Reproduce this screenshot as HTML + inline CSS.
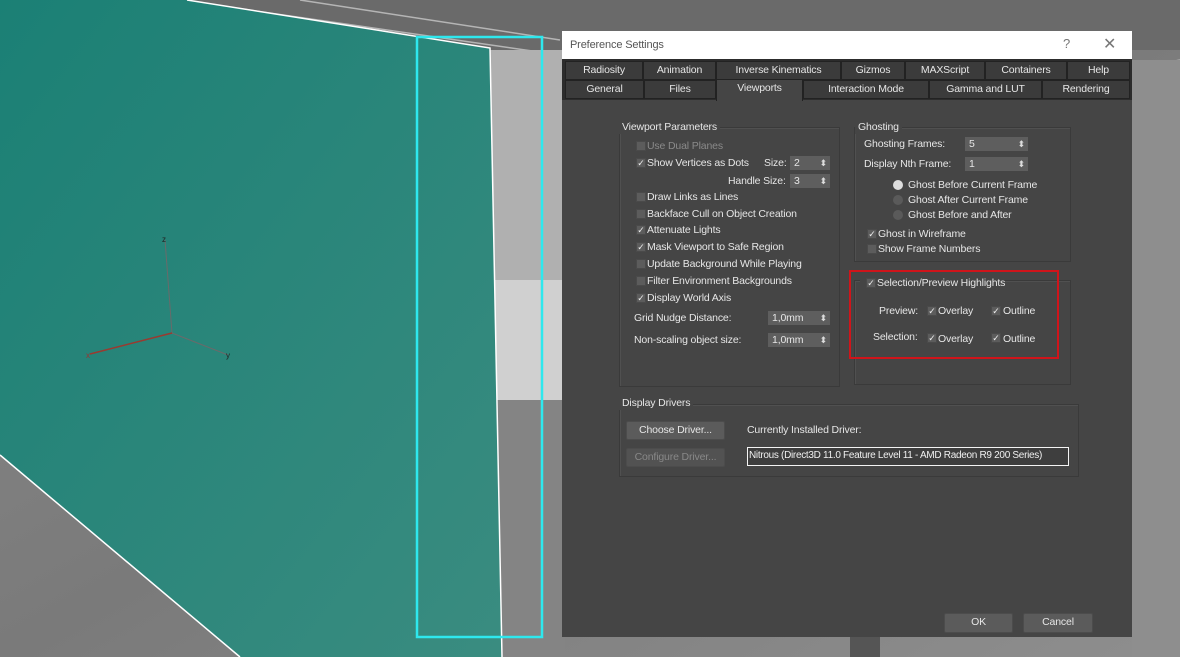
<!DOCTYPE html>
<html><head><meta charset="utf-8"><style>
*{margin:0;padding:0;box-sizing:border-box}
body{width:1180px;height:657px;overflow:hidden;position:relative;font-family:"Liberation Sans",sans-serif;font-size:10.5px;letter-spacing:-0.15px;background:#8c8c8c}
.a{position:absolute;white-space:nowrap}
.t{position:absolute;white-space:nowrap;color:#e6e6e6;line-height:14px;height:14px}
.dis{color:#8a8a8a}
.cb{position:absolute;width:10px;height:10px;background:#5c5c5c;border:1px solid #4a4a4a;color:#eee;font-size:9px;line-height:9px;text-align:center}
.rb{position:absolute;width:10px;height:10px;border-radius:50%;background:#5a5a5a}
.sp{position:absolute;height:14px;background:#5e5e5e;color:#e6e6e6;line-height:14px;padding-left:4px}
.sp:after{content:"⬍";position:absolute;right:3px;top:0;font-size:9px;color:#ddd}
.grp{position:absolute;border:1px solid #3a3a3a;box-shadow:1px 1px 0 #505050 inset}
.lbl{position:absolute;background:#454545;padding:0 3px;color:#e6e6e6;line-height:14px}
.tab{position:absolute;height:19px;background:#3b3b3b;border:1px solid #222;color:#e6e6e6;text-align:center;line-height:17px}
.btn{position:absolute;background:#5b5b5b;border:1px solid #4c4c4c;color:#e6e6e6;text-align:center;line-height:17px;border-radius:2px}
</style></head><body>
<svg class="a" style="left:0;top:0" width="1180" height="657">
<defs><linearGradient id="g" x1="0" y1="0" x2="1" y2="1"><stop offset="0" stop-color="#1b8075"/><stop offset="1" stop-color="#3a8c80"/></linearGradient>
<linearGradient id="bg" x1="0" y1="0" x2="1" y2="1"><stop offset="0" stop-color="#8a8a8a"/><stop offset=".5" stop-color="#7a7a7a"/><stop offset="1" stop-color="#8e8e8e"/></linearGradient></defs>
<rect width="1180" height="657" fill="url(#bg)"/>
<rect x="0" y="0" width="1180" height="50" fill="#6a6a6a"/>
<g stroke="#b5b5b5" stroke-width="1.5" fill="none"><line x1="180" y1="0" x2="560" y2="55"/><line x1="300" y1="0" x2="560" y2="40"/><line x1="1130" y1="70" x2="1180" y2="60"/></g>
<rect x="1132" y="60" width="48" height="597" fill="#8e8e8e"/>
<rect x="490" y="50" width="75" height="230" fill="#b0b0b0"/>
<rect x="495" y="280" width="70" height="120" fill="#d0d0d0"/>
<rect x="495" y="400" width="70" height="257" fill="#848484"/>
<polygon points="187,0 490,48 502,657 240,657 0,455 0,0" fill="url(#g)"/>
<polyline points="187,0 490,48 502,657" stroke="#fff" stroke-width="1.5" fill="none"/>
<line x1="0" y1="455" x2="240" y2="657" stroke="#fff" stroke-width="1.5"/>
<g stroke="#6a6a6a" stroke-width="1"><line x1="165" y1="240" x2="172" y2="333"/><line x1="172" y1="333" x2="228" y2="355"/></g>
<line x1="172" y1="333" x2="90" y2="354" stroke="#9a3a30" stroke-width="1.5"/>
<text x="162" y="242" font-size="8" fill="#222" font-family="Liberation Sans">z</text>
<text x="226" y="358" font-size="8" fill="#222" font-family="Liberation Sans">y</text>
<text x="86" y="358" font-size="8" fill="#933" font-family="Liberation Sans">x</text>
<rect x="417" y="37" width="125" height="600" fill="none" stroke="#2ee8ee" stroke-width="2.5"/>
</svg>
<div class="a" style="left:562px;top:31px;width:570px;height:606px;background:#454545"></div>
<div class="a" style="left:562px;top:31px;width:570px;height:28px;background:#fff"></div>
<div class="a" style="left:570px;top:37px;color:#555;font-size:11px;line-height:16px">Preference Settings</div>
<div class="a" style="left:1063px;top:36px;color:#777;font-size:13px">?</div>
<div class="a" style="left:1103px;top:34px;color:#777;font-size:16px">✕</div>
<div class="a" style="left:562px;top:59px;width:570px;height:41px;background:#2c2c2c"></div>
<div class="tab" style="left:565px;top:61px;width:78px">Radiosity</div>
<div class="tab" style="left:643px;top:61px;width:73px">Animation</div>
<div class="tab" style="left:716px;top:61px;width:125px">Inverse Kinematics</div>
<div class="tab" style="left:841px;top:61px;width:64px">Gizmos</div>
<div class="tab" style="left:905px;top:61px;width:80px">MAXScript</div>
<div class="tab" style="left:985px;top:61px;width:82px">Containers</div>
<div class="tab" style="left:1067px;top:61px;width:63px">Help</div>
<div class="tab" style="left:565px;top:80px;width:79px">General</div>
<div class="tab" style="left:644px;top:80px;width:72px">Files</div>
<div class="tab" style="left:716px;top:79px;width:87px;height:22px;background:#454545;border-bottom:none">Viewports</div>
<div class="tab" style="left:803px;top:80px;width:126px">Interaction Mode</div>
<div class="tab" style="left:929px;top:80px;width:113px">Gamma and LUT</div>
<div class="tab" style="left:1042px;top:80px;width:88px">Rendering</div>

<div class="grp" style="left:619px;top:127px;width:221px;height:260px"></div>
<div class="lbl" style="left:619px;top:120px">Viewport Parameters</div>
<div class="grp" style="left:854px;top:127px;width:217px;height:135px"></div>
<div class="lbl" style="left:855px;top:120px">Ghosting</div>
<div class="grp" style="left:854px;top:280px;width:217px;height:105px"></div>
<div class="grp" style="left:619px;top:404px;width:460px;height:73px"></div>
<div class="lbl" style="left:619px;top:396px">Display Drivers</div>

<div class="cb" style="left:636px;top:141px;color:transparent"></div><div class="t dis" style="left:647px;top:139px">Use Dual Planes</div>
<div class="cb" style="left:636px;top:158px">✓</div><div class="t" style="left:647px;top:156px">Show Vertices as Dots</div>
<div class="t" style="left:764px;top:156px">Size:</div><div class="sp" style="left:790px;top:156px;width:40px">2</div>
<div class="t" style="left:728px;top:174px">Handle Size:</div><div class="sp" style="left:790px;top:174px;width:40px">3</div>
<div class="cb" style="left:636px;top:192px"></div><div class="t" style="left:647px;top:190px">Draw Links as Lines</div>
<div class="cb" style="left:636px;top:209px"></div><div class="t" style="left:647px;top:207px">Backface Cull on Object Creation</div>
<div class="cb" style="left:636px;top:225px">✓</div><div class="t" style="left:647px;top:223px">Attenuate Lights</div>
<div class="cb" style="left:636px;top:242px">✓</div><div class="t" style="left:647px;top:240px">Mask Viewport to Safe Region</div>
<div class="cb" style="left:636px;top:259px"></div><div class="t" style="left:647px;top:257px">Update Background While Playing</div>
<div class="cb" style="left:636px;top:276px"></div><div class="t" style="left:647px;top:274px">Filter Environment Backgrounds</div>
<div class="cb" style="left:636px;top:293px">✓</div><div class="t" style="left:647px;top:291px">Display World Axis</div>
<div class="t" style="left:634px;top:311px">Grid Nudge Distance:</div><div class="sp" style="left:768px;top:311px;width:62px">1,0mm</div>
<div class="t" style="left:634px;top:333px">Non-scaling object size:</div><div class="sp" style="left:768px;top:333px;width:62px">1,0mm</div>

<div class="t" style="left:864px;top:137px">Ghosting Frames:</div><div class="sp" style="left:965px;top:137px;width:63px">5</div>
<div class="t" style="left:864px;top:157px">Display Nth Frame:</div><div class="sp" style="left:965px;top:157px;width:63px">1</div>
<div class="rb" style="left:893px;top:180px;background:#ddd"></div><div class="t" style="left:908px;top:178px">Ghost Before Current Frame</div>
<div class="rb" style="left:893px;top:195px"></div><div class="t" style="left:908px;top:193px">Ghost After Current Frame</div>
<div class="rb" style="left:893px;top:210px"></div><div class="t" style="left:908px;top:208px">Ghost Before and After</div>
<div class="cb" style="left:867px;top:229px">✓</div><div class="t" style="left:878px;top:227px">Ghost in Wireframe</div>
<div class="cb" style="left:867px;top:244px"></div><div class="t" style="left:878px;top:242px">Show Frame Numbers</div>

<div class="a" style="left:860px;top:276px;width:135px;height:14px;background:#454545"></div>
<div class="cb" style="left:866px;top:278px">✓</div><div class="t" style="left:877px;top:276px">Selection/Preview Highlights</div>
<div class="t" style="left:879px;top:304px">Preview:</div>
<div class="cb" style="left:927px;top:306px">✓</div><div class="t" style="left:938px;top:304px">Overlay</div>
<div class="cb" style="left:991px;top:306px">✓</div><div class="t" style="left:1003px;top:304px">Outline</div>
<div class="t" style="left:873px;top:330px">Selection:</div>
<div class="cb" style="left:927px;top:333px">✓</div><div class="t" style="left:938px;top:332px">Overlay</div>
<div class="cb" style="left:991px;top:333px">✓</div><div class="t" style="left:1003px;top:332px">Outline</div>
<div class="a" style="left:849px;top:270px;width:210px;height:89px;border:2.5px solid #d0141a"></div>

<div class="btn" style="left:626px;top:421px;width:99px;height:19px">Choose Driver...</div>
<div class="btn" style="left:626px;top:448px;width:99px;height:19px;color:#888;background:#525252">Configure Driver...</div>
<div class="t" style="left:747px;top:423px">Currently Installed Driver:</div>
<div class="a" style="left:747px;top:447px;width:322px;height:19px;border:1.5px solid #f4f4f4;background:#3e3e3e;color:#f0f0f0;line-height:16px;padding-left:1px;font-size:10px;letter-spacing:-0.3px;overflow:hidden">Nitrous (Direct3D 11.0 Feature Level 11 - AMD Radeon R9 200 Series)</div>

<div class="btn" style="left:944px;top:613px;width:69px;height:20px">OK</div>
<div class="btn" style="left:1023px;top:613px;width:70px;height:20px">Cancel</div>
<div class="a" style="left:850px;top:637px;width:30px;height:20px;background:#555"></div>
</body></html>
